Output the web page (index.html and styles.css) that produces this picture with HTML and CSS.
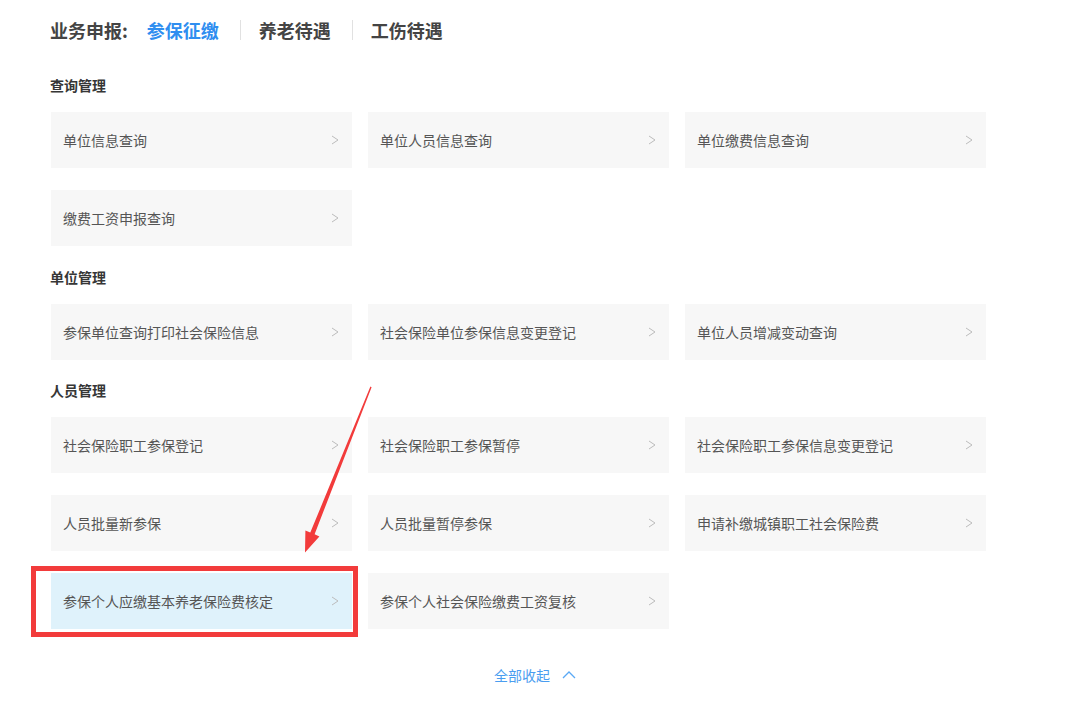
FILE: index.html
```html
<!DOCTYPE html>
<html lang="zh-CN">
<head>
<meta charset="utf-8">
<title>业务申报</title>
<link rel="stylesheet" href="styles.css">
</head>
<body>
<div class="page">
  <div class="tabs">
    <span class="tabs-label">业务申报:</span>
    <span class="tab active">参保征缴</span>
    <span class="sep"></span>
    <span class="tab">养老待遇</span>
    <span class="sep"></span>
    <span class="tab">工伤待遇</span>
  </div>

  <section class="section">
    <h3 class="section-title">查询管理</h3>
    <div class="grid">
      <a class="card"><span>单位信息查询</span><svg class="chev" viewBox="0 0 8 10"><path d="M1 1 L7 5 L1 9"/></svg></a>
      <a class="card"><span>单位人员信息查询</span><svg class="chev" viewBox="0 0 8 10"><path d="M1 1 L7 5 L1 9"/></svg></a>
      <a class="card"><span>单位缴费信息查询</span><svg class="chev" viewBox="0 0 8 10"><path d="M1 1 L7 5 L1 9"/></svg></a>
      <a class="card"><span>缴费工资申报查询</span><svg class="chev" viewBox="0 0 8 10"><path d="M1 1 L7 5 L1 9"/></svg></a>
    </div>
  </section>

  <section class="section">
    <h3 class="section-title">单位管理</h3>
    <div class="grid">
      <a class="card"><span>参保单位查询打印社会保险信息</span><svg class="chev" viewBox="0 0 8 10"><path d="M1 1 L7 5 L1 9"/></svg></a>
      <a class="card"><span>社会保险单位参保信息变更登记</span><svg class="chev" viewBox="0 0 8 10"><path d="M1 1 L7 5 L1 9"/></svg></a>
      <a class="card"><span>单位人员增减变动查询</span><svg class="chev" viewBox="0 0 8 10"><path d="M1 1 L7 5 L1 9"/></svg></a>
    </div>
  </section>

  <section class="section">
    <h3 class="section-title">人员管理</h3>
    <div class="grid">
      <a class="card"><span>社会保险职工参保登记</span><svg class="chev" viewBox="0 0 8 10"><path d="M1 1 L7 5 L1 9"/></svg></a>
      <a class="card"><span>社会保险职工参保暂停</span><svg class="chev" viewBox="0 0 8 10"><path d="M1 1 L7 5 L1 9"/></svg></a>
      <a class="card"><span>社会保险职工参保信息变更登记</span><svg class="chev" viewBox="0 0 8 10"><path d="M1 1 L7 5 L1 9"/></svg></a>
      <a class="card"><span>人员批量新参保</span><svg class="chev" viewBox="0 0 8 10"><path d="M1 1 L7 5 L1 9"/></svg></a>
      <a class="card"><span>人员批量暂停参保</span><svg class="chev" viewBox="0 0 8 10"><path d="M1 1 L7 5 L1 9"/></svg></a>
      <a class="card"><span>申请补缴城镇职工社会保险费</span><svg class="chev" viewBox="0 0 8 10"><path d="M1 1 L7 5 L1 9"/></svg></a>
      <a class="card card-hl"><span>参保个人应缴基本养老保险费核定</span><svg class="chev" viewBox="0 0 8 10"><path d="M1 1 L7 5 L1 9"/></svg><span class="red-box"></span></a>
      <a class="card"><span>参保个人社会保险缴费工资复核</span><svg class="chev" viewBox="0 0 8 10"><path d="M1 1 L7 5 L1 9"/></svg></a>
    </div>
  </section>

  <div class="collapse">
    <span>全部收起</span>
    <svg class="chev-up" viewBox="0 0 14 8"><path d="M1 7 L7 1 L13 7"/></svg>
  </div>

  <svg class="annot-arrow" width="1080" height="711" viewBox="0 0 1080 711">
    <polygon points="370.4,386.6 371.6,387.3 314.6,534.2 319.4,536.4 305,552.5 305.4,530.6 310.3,532.6" />
  </svg>
</div>
</body>
</html>
```

FILE: styles.css
```css
* { box-sizing: border-box; }

html, body {
  margin: 0;
  padding: 0;
  background: #ffffff;
}

body {
  font-family: "Noto Sans CJK SC", "Noto Sans", "Liberation Sans", sans-serif;
  color: #555555;
}

.page {
  position: relative;
  width: 1080px;
  height: 711px;
  padding: 18px 0 0 51px;
  overflow: hidden;
}

.tabs {
  display: flex;
  align-items: center;
  height: 24px;
  font-size: 18px;
  font-weight: bold;
  line-height: 24px;
  color: #444444;
  margin-left: -1px;
}

.tabs-label {
  margin-right: 19px;
}

.tab.active {
  color: #2f8ef0;
}

.sep {
  display: inline-block;
  width: 1px;
  height: 20px;
  background: #e1e1e1;
  margin: 0 18px 0 21px;
}

.section {
  margin-top: 33px;
}

.section + .section {
  margin-top: 20.5px;
}

.section-title {
  margin: 0 0 17px -1px;
  height: 20px;
  font-size: 14px;
  line-height: 20px;
  font-weight: bold;
  color: #363636;
}

.grid {
  display: grid;
  grid-template-columns: repeat(3, 301px);
  column-gap: 16px;
  row-gap: 22px;
}

.card {
  position: relative;
  display: flex;
  align-items: center;
  justify-content: space-between;
  height: 56px;
  padding: 0 13px 0 12px;
  background: #f7f7f7;
  font-size: 14px;
  color: #555555;
  text-decoration: none;
}

.card-hl {
  background: #dff2fb;
}

.chev {
  width: 8px;
  height: 10px;
  fill: none;
  stroke: #bcbcbc;
  stroke-width: 1;
}

.red-box {
  position: absolute;
  left: -20px;
  right: -6px;
  top: -7px;
  bottom: -8px;
  border: 5px solid #f23b3b;
  pointer-events: none;
}

.collapse {
  display: flex;
  align-items: center;
  justify-content: center;
  gap: 12px;
  margin: 36px 0 0 -61px;
  height: 20px;
  font-size: 14px;
  line-height: 20px;
  color: #4a9df0;
}

.chev-up {
  width: 14px;
  height: 8px;
  fill: none;
  stroke: #5aa9f5;
  stroke-width: 1.3;
}

.annot-arrow {
  position: absolute;
  left: 0;
  top: 0;
  pointer-events: none;
}

.annot-arrow polygon {
  fill: #f23b3b;
}
```
